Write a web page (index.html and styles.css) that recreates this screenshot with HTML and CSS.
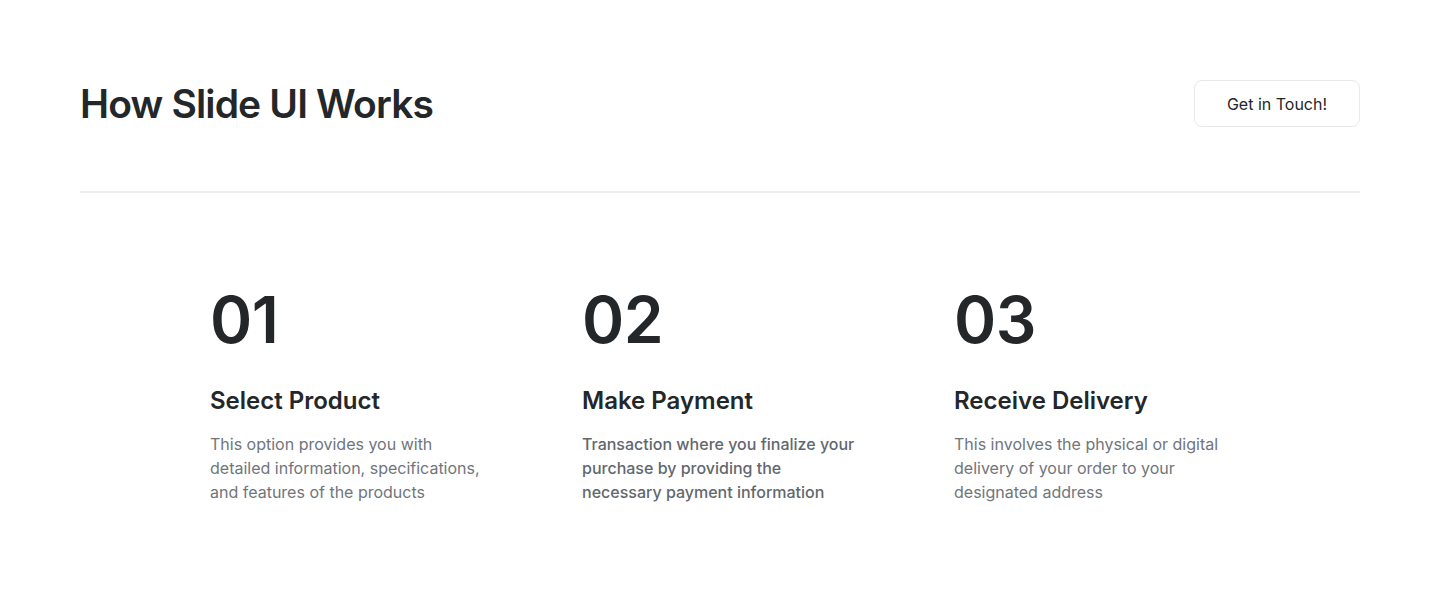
FILE: index.html
```html
<!DOCTYPE html>
<html lang="en">
<head>
<meta charset="utf-8">
<title>How Slide UI Works</title>
<link rel="stylesheet" href="styles.css">
</head>
<body>
<section class="section">
  <header class="head">
    <h1 class="title">How Slide UI Works</h1>
    <a class="btn" href="#">Get in Touch!</a>
  </header>
  <hr class="divider">
  <div class="steps">
    <div class="step">
      <div class="num">01</div>
      <h3 class="step-title">Select Product</h3>
      <p class="step-text">This option provides you with detailed information, specifications, and features of the products</p>
    </div>
    <div class="step">
      <div class="num">02</div>
      <h3 class="step-title">Make Payment</h3>
      <p class="step-text step-text-dark">Transaction where you finalize your purchase by providing the necessary payment information</p>
    </div>
    <div class="step">
      <div class="num">03</div>
      <h3 class="step-title">Receive Delivery</h3>
      <p class="step-text">This involves the physical or digital delivery of your order to your designated address</p>
    </div>
  </div>
</section>
</body>
</html>
```
FILE: styles.css
```css
* { box-sizing: border-box; }
html, body { margin: 0; padding: 0; background: #fff; }
body {
  font-family: Inter, "Noto Sans", "Liberation Sans", sans-serif;
  color: #23272a;
}
.section {
  padding: 80px 80px 0;
}
.head {
  display: flex;
  align-items: center;
  justify-content: space-between;
  height: 47px;
}
.title {
  margin: 0;
  font-size: 39px;
  font-weight: 600;
  letter-spacing: -0.85px;
  line-height: 48px;
  color: #23272a;
}
.btn {
  display: flex;
  align-items: center;
  justify-content: center;
  width: 166px;
  height: 47px;
  border: 1px solid #e7e8ea;
  border-radius: 8px;
  font-size: 16px;
  font-weight: 400;
  color: #23272a;
  text-decoration: none;
}
.divider {
  border: 0;
  border-top: 2px solid #eeeff0;
  margin: 64px 0 0;
}
.steps {
  display: grid;
  grid-template-columns: repeat(3, 276px);
  column-gap: 96px;
  justify-content: center;
  padding-top: 87px;
}
.num {
  font-size: 64px;
  font-weight: 600;
  line-height: 80px;
  letter-spacing: -0.5px;
  color: #23272a;
}
.step-title {
  margin: 25px 0 0;
  font-size: 24px;
  font-weight: 600;
  line-height: 32px;
  color: #23272a;
}
.step-text {
  margin: 15px 0 0;
  font-size: 16px;
  line-height: 24px;
  color: #70757c;
}
.step-text-dark {
  color: #62676e;
  font-weight: 500;
}
```
